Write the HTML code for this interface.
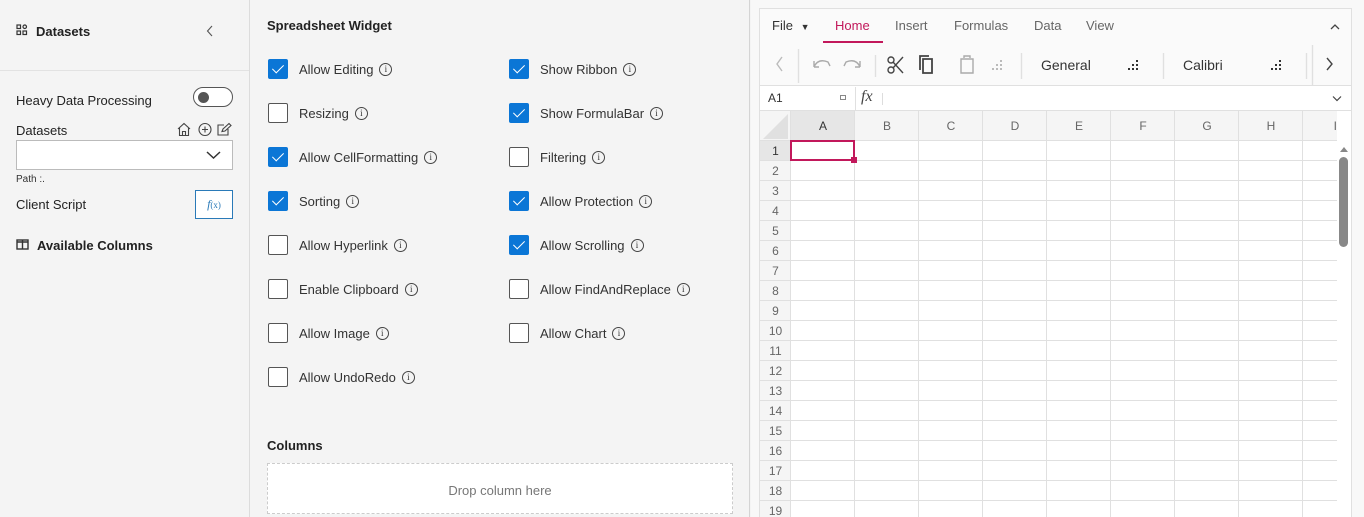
<!DOCTYPE html>
<html><head><meta charset="utf-8"><style>
*{box-sizing:border-box;margin:0;padding:0}
html,body{width:1364px;height:517px;overflow:hidden}
body{font-family:"Liberation Sans",sans-serif;background:#f4f4f4;position:relative;color:#222}
.abs{position:absolute}
.left{left:0;top:0;width:250px;height:517px;background:#f4f4f4;border-right:1px solid #dcdcdc}
.mid{left:251px;top:0;width:499px;height:517px;background:#f4f4f4;border-right:1px solid #d4d4d4}
.right{left:751px;top:0;width:613px;height:517px;background:#f8f8f8}
.t13{font-size:13px}
.cb{position:absolute;width:20px;height:20px;border:1px solid #555;background:#fff;border-radius:2px}
.cb.on{background:#0b76d6;border-color:#0b76d6}
.cb.on::after{content:"";position:absolute;left:6px;top:2px;width:5px;height:10px;border:solid #fff;border-width:0 1.5px 1.5px 0;transform:rotate(45deg)}
.lbl{position:absolute;font-size:13px;color:#333;line-height:16px}
.info{display:inline-block;width:13px;height:13px;border:1px solid #444;border-radius:50%;font-size:9px;line-height:11px;text-align:center;margin-left:6px;vertical-align:top;margin-top:1px;font-family:"Liberation Serif",serif}
.ss{left:759px;top:8px;width:593px;height:509px;border:1px solid #e0e0e0;border-bottom:none;background:#fff;overflow:hidden}
.gl{position:absolute;background:#e0e0e0}
.rh{position:absolute;left:0;width:31px;height:20px;font-size:12px;color:#666;text-align:center;line-height:20px;background:#f5f5f5}
.ch{position:absolute;top:0;height:30px;width:64px;font-size:12px;color:#666;text-align:center;line-height:30px}
.tab{position:absolute;top:9px;font-size:13px;color:#666}
</style></head><body>
<div class="abs left">
  <svg class="abs" style="left:16px;top:24px" width="12" height="12" viewBox="0 0 12 12" fill="none" stroke="#333" stroke-width="1.2"><rect x="1" y="1" width="3.5" height="3.5"/><rect x="7" y="1" width="3.5" height="3.5" rx="1.7"/><rect x="1" y="7" width="3.5" height="3.5"/><rect x="7" y="7" width="3.5" height="3.5"/></svg>
  <div class="abs" style="left:36px;top:24px;font-size:13px;font-weight:bold">Datasets</div>
  <svg class="abs" style="left:206px;top:25px" width="8" height="12"><path d="M6 1 L1.5 6 L6 11" fill="none" stroke="#555" stroke-width="1.1"/></svg>
  <div class="abs" style="left:0;top:70px;width:249px;height:1px;background:#e2e2e2"></div>
  <div class="abs t13" style="left:16px;top:93px">Heavy Data Processing</div>
  <div class="abs" style="left:193px;top:87px;width:40px;height:20px;border:1px solid #555;border-radius:10px;background:#fff"><div style="position:absolute;left:4px;top:4px;width:11px;height:11px;border-radius:50%;background:#555"></div></div>
  <div class="abs t13" style="left:16px;top:123px">Datasets</div>
  <svg class="abs" style="left:176px;top:122px" width="58" height="15" fill="none" stroke="#444" stroke-width="1.1"><path d="M2 7 L8 1.5 L14 7 M3.5 6 V13.5 H12.5 V6 M6.5 13.5 V9.5 H9.5 V13.5"/><circle cx="29" cy="7.5" r="6"/><path d="M29 4.5V10.5M26 7.5H32"/><path d="M52 7V13H42V3H48 M46 9.5 L47 7 L53 1.5 L55 3.5 L49 9 Z"/></svg>
  <div class="abs" style="left:16px;top:140px;width:217px;height:30px;border:1px solid #bbb;background:#fff"><svg style="position:absolute;right:11px;top:9px" width="15" height="10"><path d="M1 2 L7.5 8 L14 2" fill="none" stroke="#333" stroke-width="1.5"/></svg></div>
  <div class="abs" style="left:16px;top:174px;font-size:10px;color:#333">Path :.</div>
  <div class="abs t13" style="left:16px;top:197px">Client Script</div>
  <div class="abs" style="left:195px;top:190px;width:38px;height:29px;border:1px solid #2a7ab8;background:#fff;color:#2a7ab8;font-size:12px;text-align:center;line-height:27px;font-family:'Liberation Serif',serif"><i>f</i><span style="font-size:9px">(x)</span></div>
  <svg class="abs" style="left:16px;top:239px" width="13" height="11" fill="none" stroke="#333" stroke-width="1.4"><rect x="1" y="1" width="11" height="9"/><path d="M6.5 1V10M1 3H12"/></svg>
  <div class="abs" style="left:37px;top:238px;font-size:13px;font-weight:bold">Available Columns</div>
</div>

<div class="abs mid">
  <div class="abs" style="left:16px;top:18px;font-size:13px;font-weight:bold">Spreadsheet Widget</div>
  <div class="cb on" style="left:17px;top:59px"></div><div class="lbl" style="left:48px;top:62px">Allow Editing<span class="info">i</span></div>
  <div class="cb" style="left:17px;top:103px"></div><div class="lbl" style="left:48px;top:106px">Resizing<span class="info">i</span></div>
  <div class="cb on" style="left:17px;top:147px"></div><div class="lbl" style="left:48px;top:150px">Allow CellFormatting<span class="info">i</span></div>
  <div class="cb on" style="left:17px;top:191px"></div><div class="lbl" style="left:48px;top:194px">Sorting<span class="info">i</span></div>
  <div class="cb" style="left:17px;top:235px"></div><div class="lbl" style="left:48px;top:238px">Allow Hyperlink<span class="info">i</span></div>
  <div class="cb" style="left:17px;top:279px"></div><div class="lbl" style="left:48px;top:282px">Enable Clipboard<span class="info">i</span></div>
  <div class="cb" style="left:17px;top:323px"></div><div class="lbl" style="left:48px;top:326px">Allow Image<span class="info">i</span></div>
  <div class="cb" style="left:17px;top:367px"></div><div class="lbl" style="left:48px;top:370px">Allow UndoRedo<span class="info">i</span></div>
  <div class="cb on" style="left:258px;top:59px"></div><div class="lbl" style="left:289px;top:62px">Show Ribbon<span class="info">i</span></div>
  <div class="cb on" style="left:258px;top:103px"></div><div class="lbl" style="left:289px;top:106px">Show FormulaBar<span class="info">i</span></div>
  <div class="cb" style="left:258px;top:147px"></div><div class="lbl" style="left:289px;top:150px">Filtering<span class="info">i</span></div>
  <div class="cb on" style="left:258px;top:191px"></div><div class="lbl" style="left:289px;top:194px">Allow Protection<span class="info">i</span></div>
  <div class="cb on" style="left:258px;top:235px"></div><div class="lbl" style="left:289px;top:238px">Allow Scrolling<span class="info">i</span></div>
  <div class="cb" style="left:258px;top:279px"></div><div class="lbl" style="left:289px;top:282px">Allow FindAndReplace<span class="info">i</span></div>
  <div class="cb" style="left:258px;top:323px"></div><div class="lbl" style="left:289px;top:326px">Allow Chart<span class="info">i</span></div>
  <div class="abs" style="left:16px;top:438px;font-size:13px;font-weight:bold">Columns</div>
  <div class="abs" style="left:16px;top:463px;width:466px;height:51px;border:1px dashed #ccc;background:#fff;text-align:center;line-height:53px;font-size:13px;color:#777">Drop column here</div>
</div>

<div class="abs right"></div>
<div class="abs ss">
  <div class="abs" style="left:0;top:0;width:591px;height:77px;background:#fafafa;border-bottom:1px solid #e0e0e0"></div>
  <div class="tab" style="left:12px;color:#333">File <span style="font-size:9px;margin-left:4px">▼</span></div>
  <div class="tab" style="left:75px;color:#c2185b">Home</div>
  <div class="abs" style="left:63px;top:32px;width:60px;height:2px;background:#c2185b"></div>
  <div class="tab" style="left:135px">Insert</div>
  <div class="tab" style="left:194px">Formulas</div>
  <div class="tab" style="left:274px">Data</div>
  <div class="tab" style="left:326px">View</div>
  <svg class="abs" style="left:570px;top:14px" width="10" height="8"><path d="M1 6 L5 2 L9 6" fill="none" stroke="#444" stroke-width="1.3"/></svg>
  <svg class="abs" style="left:0;top:36px" width="591" height="40" fill="none" stroke-width="1.4">
    <path d="M22 12 L17 19 L22 26" stroke="#bbb"/>
    <line x1="38.5" y1="4" x2="38.5" y2="38" stroke="#e0e0e0"/>
    <path d="M54 22 Q58 13 68 17 L70 21 M54 22 V16 M54 22 H59" stroke="#aaa"/>
    <path d="M100 22 Q96 13 86 17 L84 21 M100 22 V16 M100 22 H95" stroke="#aaa"/>
    <line x1="115.5" y1="10" x2="115.5" y2="32" stroke="#e0e0e0"/>
    <g stroke="#444"><circle cx="131" cy="25" r="3"/><circle cx="131" cy="15" r="3"/><path d="M133 23 L143 12 M133 17 L143 28"/></g>
    <path d="M163 14 H172 V28 H163 Z M160 25 V11 H169" stroke="#444" stroke-width="1.8"/>
    <path d="M201 14 H213 V28 H201 Z M204 13 V11 H210 V13" stroke="#aaa"/>
    <g fill="#bbb" stroke="none"><rect x="240" y="15" width="2" height="2"/><rect x="240" y="19" width="2" height="2"/><rect x="236" y="19" width="2" height="2"/><rect x="240" y="23" width="2" height="2"/><rect x="236" y="23" width="2" height="2"/><rect x="232" y="23" width="2" height="2"/></g>
    <line x1="261.5" y1="8" x2="261.5" y2="34" stroke="#e0e0e0"/>
    <g fill="#333" stroke="none"><rect x="376" y="15" width="2" height="2"/><rect x="376" y="19" width="2" height="2"/><rect x="372" y="19" width="2" height="2"/><rect x="376" y="23" width="2" height="2"/><rect x="372" y="23" width="2" height="2"/><rect x="368" y="23" width="2" height="2"/></g>
    <line x1="403.5" y1="8" x2="403.5" y2="34" stroke="#e0e0e0"/>
    <g fill="#333" stroke="none"><rect x="519" y="15" width="2" height="2"/><rect x="519" y="19" width="2" height="2"/><rect x="515" y="19" width="2" height="2"/><rect x="519" y="23" width="2" height="2"/><rect x="515" y="23" width="2" height="2"/><rect x="511" y="23" width="2" height="2"/></g>
    <line x1="546.5" y1="8" x2="546.5" y2="34" stroke="#e0e0e0"/>
    <line x1="552.5" y1="0" x2="552.5" y2="40" stroke="#e0e0e0"/>
    <path d="M567 13 L572 19 L567 25" stroke="#444"/>
  </svg>
  <div class="abs" style="left:281px;top:48px;font-size:14px;color:#333">General</div>
  <div class="abs" style="left:423px;top:48px;font-size:14px;color:#333">Calibri</div>
  <div class="abs" style="left:0;top:78px;width:591px;height:24px;border-bottom:1px solid #e0e0e0"></div>
  <div class="abs" style="left:8px;top:82px;font-size:12px;color:#333">A1</div>
  <div class="abs" style="left:80px;top:86px;width:6px;height:5px;border:1px solid #888"></div>
  <div class="abs" style="left:95px;top:78px;width:1px;height:24px;background:#e0e0e0"></div>
  <div class="abs" style="left:101px;top:79px;font-size:16px;font-style:italic;font-family:'Liberation Serif',serif;color:#444">fx</div>
  <div class="abs" style="left:122px;top:84px;width:1px;height:12px;background:#ddd"></div>
  <svg class="abs" style="left:572px;top:86px" width="10" height="7"><path d="M1 1.5 L5 5.5 L9 1.5" fill="none" stroke="#444" stroke-width="1.2"/></svg>
  <div class="abs" style="left:0;top:102px;width:577px;height:30px;background:#f5f5f5"></div>
  <div class="abs" style="left:31px;top:102px;width:64px;height:30px;background:#e6e6e6"></div>
  <svg class="abs" style="left:0;top:102px" width="31" height="30"><path d="M28 3 V28 H3 Z" fill="#e0e0e0"/></svg>
  <div class="abs" style="left:0;top:102px;width:577px;height:415px">
    <div class="ch" style="left:31px;color:#333">A</div><div class="ch" style="left:95px">B</div><div class="ch" style="left:159px">C</div><div class="ch" style="left:223px">D</div><div class="ch" style="left:287px">E</div><div class="ch" style="left:351px">F</div><div class="ch" style="left:415px">G</div><div class="ch" style="left:479px">H</div><div class="ch" style="left:543px;width:34px;text-align:right">I</div>
    <div class="rh" style="top:30px;background:#e6e6e6;color:#333">1</div><div class="rh" style="top:50px">2</div><div class="rh" style="top:70px">3</div><div class="rh" style="top:90px">4</div><div class="rh" style="top:110px">5</div><div class="rh" style="top:130px">6</div><div class="rh" style="top:150px">7</div><div class="rh" style="top:170px">8</div><div class="rh" style="top:190px">9</div><div class="rh" style="top:210px">10</div><div class="rh" style="top:230px">11</div><div class="rh" style="top:250px">12</div><div class="rh" style="top:270px">13</div><div class="rh" style="top:290px">14</div><div class="rh" style="top:310px">15</div><div class="rh" style="top:330px">16</div><div class="rh" style="top:350px">17</div><div class="rh" style="top:370px">18</div><div class="rh" style="top:390px">19</div>
    <div class="gl" style="left:30px;top:0;width:1px;height:415px"></div>
    <div class="gl" style="left:94px;top:0;width:1px;height:415px"></div>
    <div class="gl" style="left:158px;top:0;width:1px;height:415px"></div>
    <div class="gl" style="left:222px;top:0;width:1px;height:415px"></div>
    <div class="gl" style="left:286px;top:0;width:1px;height:415px"></div>
    <div class="gl" style="left:350px;top:0;width:1px;height:415px"></div>
    <div class="gl" style="left:414px;top:0;width:1px;height:415px"></div>
    <div class="gl" style="left:478px;top:0;width:1px;height:415px"></div>
    <div class="gl" style="left:542px;top:0;width:1px;height:415px"></div>
    <div class="gl" style="left:0;top:29px;width:577px;height:1px"></div>
    <div class="gl" style="left:0;top:49px;width:577px;height:1px"></div><div class="gl" style="left:0;top:69px;width:577px;height:1px"></div><div class="gl" style="left:0;top:89px;width:577px;height:1px"></div><div class="gl" style="left:0;top:109px;width:577px;height:1px"></div><div class="gl" style="left:0;top:129px;width:577px;height:1px"></div><div class="gl" style="left:0;top:149px;width:577px;height:1px"></div><div class="gl" style="left:0;top:169px;width:577px;height:1px"></div><div class="gl" style="left:0;top:189px;width:577px;height:1px"></div><div class="gl" style="left:0;top:209px;width:577px;height:1px"></div><div class="gl" style="left:0;top:229px;width:577px;height:1px"></div><div class="gl" style="left:0;top:249px;width:577px;height:1px"></div><div class="gl" style="left:0;top:269px;width:577px;height:1px"></div><div class="gl" style="left:0;top:289px;width:577px;height:1px"></div><div class="gl" style="left:0;top:309px;width:577px;height:1px"></div><div class="gl" style="left:0;top:329px;width:577px;height:1px"></div><div class="gl" style="left:0;top:349px;width:577px;height:1px"></div><div class="gl" style="left:0;top:369px;width:577px;height:1px"></div><div class="gl" style="left:0;top:389px;width:577px;height:1px"></div><div class="gl" style="left:0;top:409px;width:577px;height:1px"></div>
    <div class="abs" style="left:30px;top:29px;width:65px;height:21px;border:2px solid #c2185b"></div>
    <div class="abs" style="left:91px;top:46px;width:6px;height:6px;background:#c2185b"></div>
  </div>
  <div class="abs" style="left:577px;top:132px;width:14px;height:385px;background:#fff"></div>
  <svg class="abs" style="left:579px;top:136px" width="10" height="8"><path d="M1 7 L5 2 L9 7 Z" fill="#888"/></svg>
  <div class="abs" style="left:579px;top:148px;width:9px;height:90px;background:#888;border-radius:5px"></div>
</div>
</body></html>
